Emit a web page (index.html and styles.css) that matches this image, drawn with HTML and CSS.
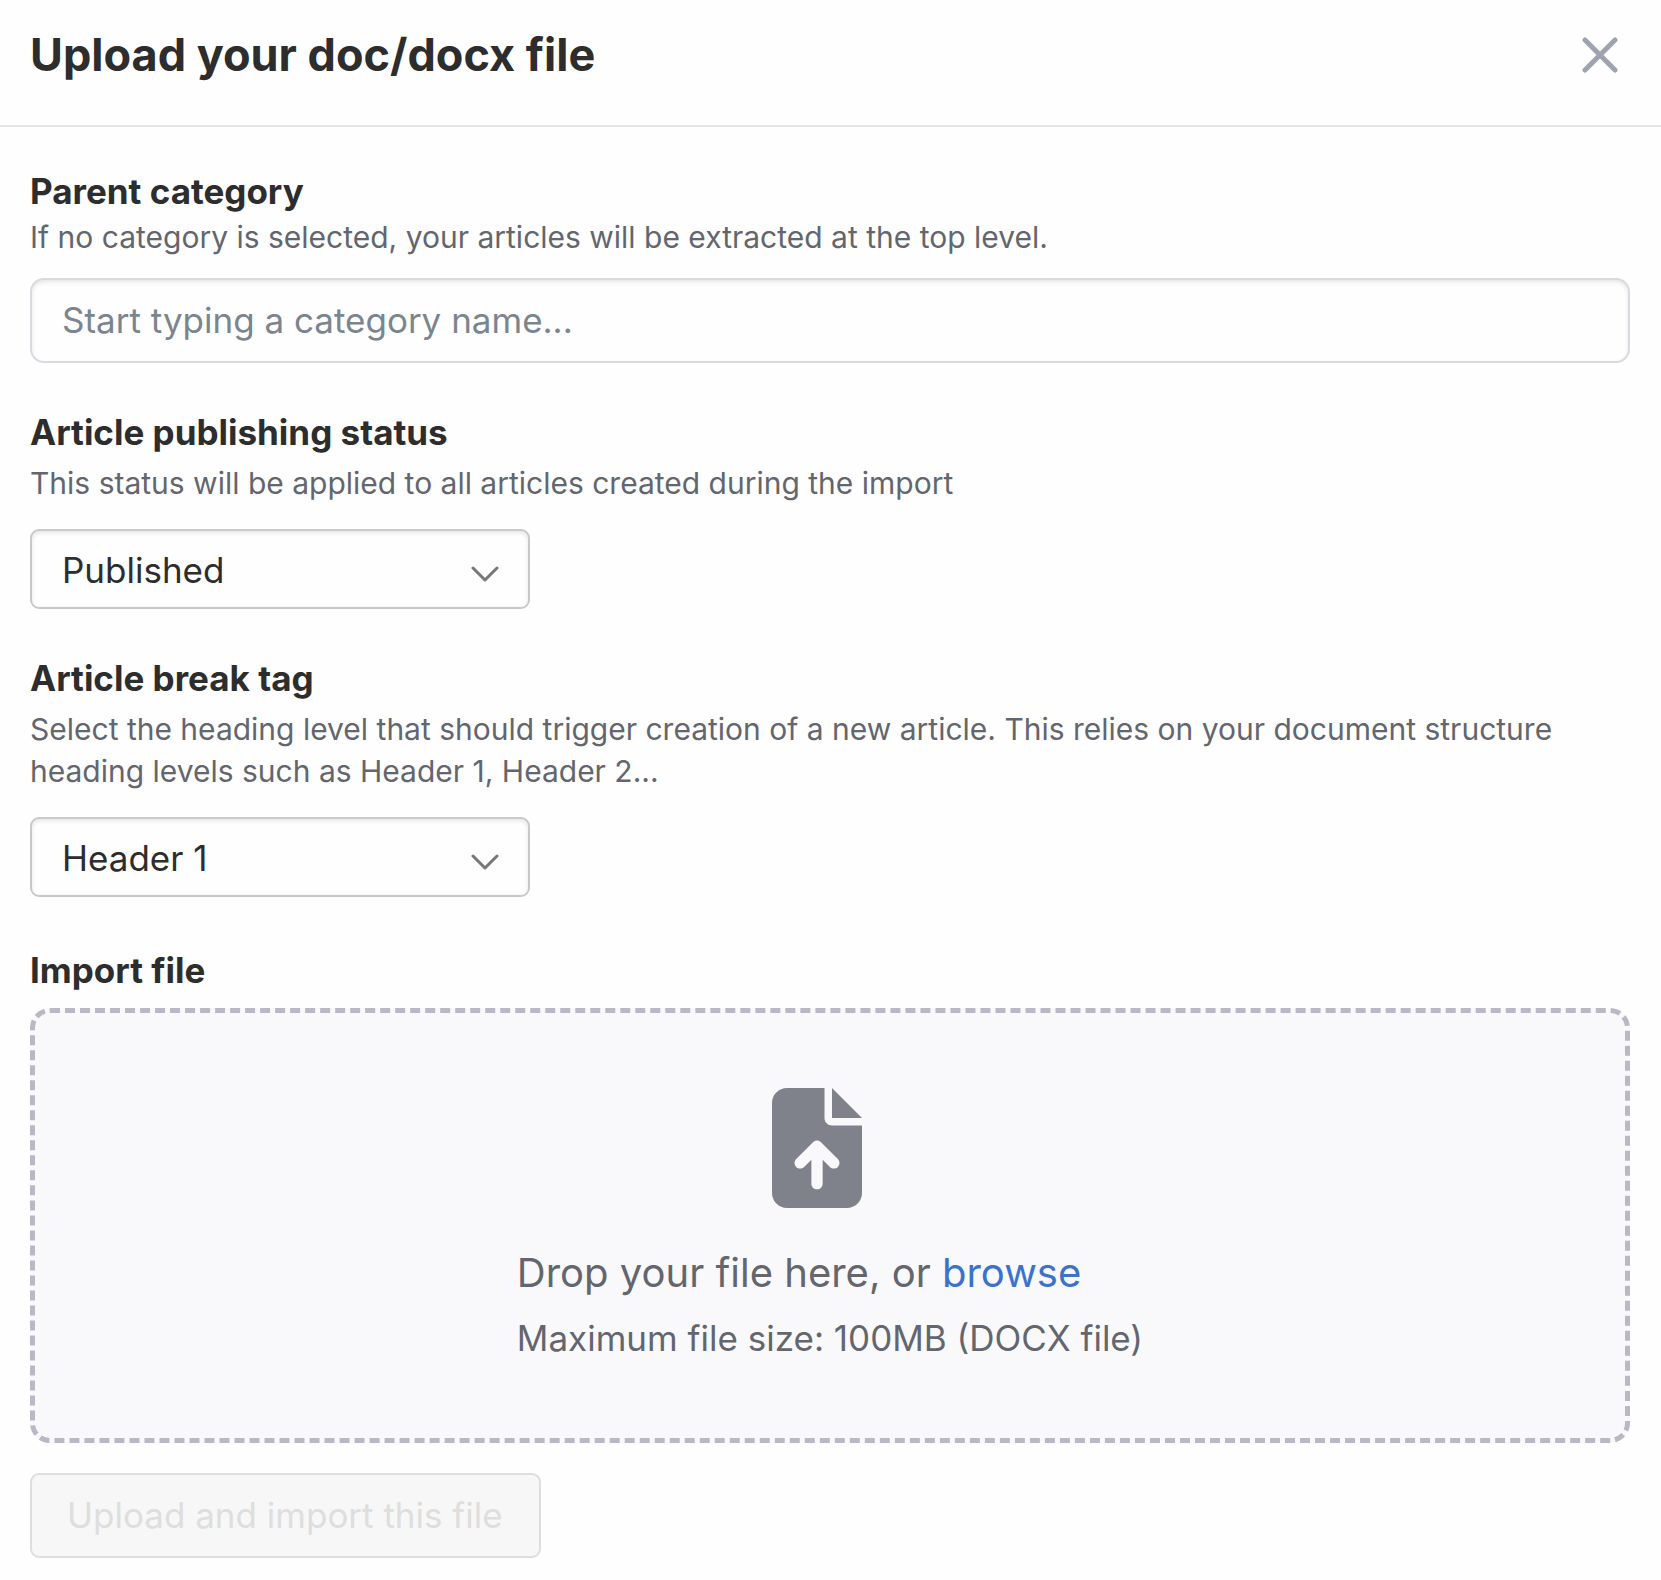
FILE: index.html
```html
<!DOCTYPE html>
<html lang="en">
<head>
    <meta charset="UTF-8">
    <meta name="viewport" content="width=device-width, initial-scale=1.0">
    <title>Upload your doc/docx file</title>
    <link rel="stylesheet" href="styles.css">
</head>
<body>
    <header class="panel-header">
        <h1>Upload your doc/docx file</h1>
        <button type="button" class="close" aria-label="Close">
            <svg viewBox="0 0 36 36" width="36" height="36">
                <path d="M3 3L33 33M33 3L3 33"/>
            </svg>
        </button>
    </header>
    <form class="panel-body">
        <div class="field field-category">
            <label for="category">Parent category</label>
            <p>If no category is selected, your articles will be extracted at the top level.</p>
            <input type="text" id="category" name="category" placeholder="Start typing a category name...">
        </div>

        <div class="field">
            <label for="status">Article publishing status</label>
            <p>This status will be applied to all articles created during the import</p>
            <div class="select">
                <select id="status" name="status">
                    <option>Published</option>
                    <option>Draft</option>
                </select>
                <svg viewBox="0 0 28 18" width="28" height="18">
                    <path d="M2 2L14 14L26 2"/>
                </svg>
            </div>
        </div>

        <div class="field">
            <label for="break_tag">Article break tag</label>
            <p>Select the heading level that should trigger creation of a new article. This relies on your document structure heading levels such as Header 1, Header 2...</p>
            <div class="select">
                <select id="break_tag" name="break_tag">
                    <option>Header 1</option>
                    <option>Header 2</option>
                    <option>Header 3</option>
                </select>
                <svg viewBox="0 0 28 18" width="28" height="18">
                    <path d="M2 2L14 14L26 2"/>
                </svg>
            </div>
        </div>

        <div class="field field-file">
            <label for="file">Import file</label>
            <input type="file" id="file" name="file" accept=".doc,.docx" hidden>
            <div class="dropzone">
                <svg class="file-icon" viewBox="0 0 384 512" width="90" height="120">
                    <path d="M64 0C28.7 0 0 28.7 0 64V448c0 35.3 28.7 64 64 64H320c35.3 0 64-28.7 64-64V160H256c-17.7 0-32-14.3-32-32V0H64zM256 0V128H384L256 0zM216 408c0 13.3-10.7 24-24 24s-24-10.7-24-24V305.9l-31 31c-9.4 9.4-24.6 9.4-33.9 0s-9.4-24.6 0-33.9l72-72c9.4-9.4 24.6-9.4 33.9 0l72 72c9.4 9.4 9.4 24.6 0 33.9s-24.6 9.4-33.9 0l-31-31V408z"/>
                </svg>
                <div class="drop-text">
                    <p class="drop-title">Drop your file here, or <a href="#" onclick="browseFile(event)">browse</a></p>
                    <p class="drop-note">Maximum file size: 100MB (DOCX file)</p>
                </div>
            </div>
        </div>

        <button type="submit" class="submit" disabled>Upload and import this file</button>
    </form>

    <script>
        function browseFile(event) {
            event.preventDefault();
            document.getElementById('file').click();
        }
    </script>
</body>
</html>
```
FILE: styles.css
```css
* {
    box-sizing: border-box;
}
body {
    font-family: Inter, "Liberation Sans", sans-serif;
    font-size: 35px;
    line-height: 42px;
    color: #2d2d2d;
    background-color: #fefefe;
    margin: 0;
}
h1, p {
    margin: 0;
}
.panel-header {
    display: flex;
    justify-content: space-between;
    align-items: center;
    padding: 28px 43px 43px 30px;
    border-bottom: 2px solid #e4e4e9;
}
h1 {
    font-size: 45px;
    line-height: 54px;
    font-weight: 700;
}
.close {
    display: flex;
    padding: 0;
    border: none;
    background: none;
    cursor: pointer;
}
.close path {
    fill: none;
    stroke: #9fa3af;
    stroke-width: 5;
    stroke-linecap: round;
}
.panel-body {
    padding: 43px 31px 22px 30px;
}
.field {
    margin-bottom: 48px;
}
.field label {
    display: block;
    font-weight: 700;
    margin-bottom: 9px;
}
.field > p {
    font-size: 30px;
    color: #63666e;
    margin-bottom: 25px;
}
.field-category label {
    margin-bottom: 4px;
}
.field-category > p {
    margin-bottom: 20px;
}
input[type="text"],
select {
    display: block;
    width: 100%;
    font: inherit;
    color: #2d2d2d;
    background-color: #fefefe;
    box-shadow: inset 0 2px 4px rgba(0, 0, 0, 0.1);
}
input[type="text"] {
    height: 85px;
    padding: 0 30px 2px;
    border: 2px solid #d9d9df;
    border-radius: 14px;
}
input[type="text"]::placeholder {
    color: #7b858f;
    opacity: 1;
}
.select {
    position: relative;
    max-width: 500px;
}
select {
    appearance: none;
    height: 80px;
    padding: 2px 80px 0 30px;
    border: 2px solid #c9c9c9;
    border-radius: 9px;
}
.select svg {
    position: absolute;
    right: 31px;
    top: 37px;
    pointer-events: none;
}
.select path {
    fill: none;
    stroke: #777;
    stroke-width: 3;
    stroke-linecap: round;
    stroke-linejoin: round;
}
.field-file {
    margin: 52px 0 30px;
}
.field-file label {
    margin-bottom: 17px;
}
.dropzone {
    display: flex;
    flex-direction: column;
    align-items: center;
    gap: 41px;
    padding: 75px 20px 79px;
    border: 5px dashed #b9b9c5;
    border-radius: 20px;
    background-color: #f9f9fc;
    color: #63666e;
}
.file-icon {
    margin-right: 27px;
    fill: #80828b;
}
.drop-title {
    font-size: 40px;
    line-height: 48px;
    margin-bottom: 20px;
}
.drop-title a {
    color: #3b72cc;
    text-decoration: none;
}
.submit {
    height: 85px;
    padding: 0 36px 2px 35px;
    font: inherit;
    color: #dedede;
    background-color: #f7f7f7;
    border: 2px solid #dedede;
    border-radius: 9px;
}
```
